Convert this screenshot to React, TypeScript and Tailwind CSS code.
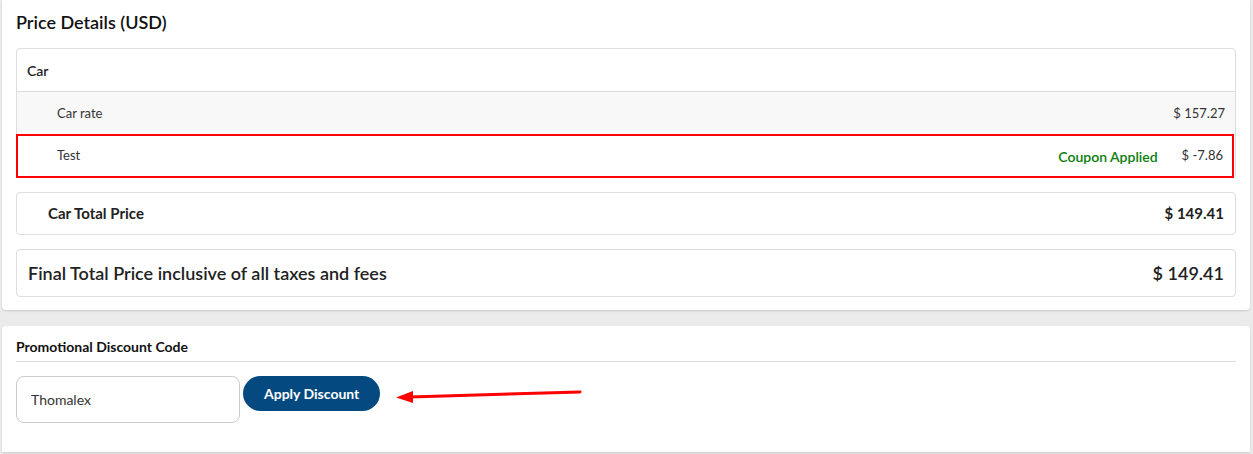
export default function App() {
  return (
    <div className="min-h-[454px] w-[1253px] bg-[#ebebeb] pl-[2px] pr-[3px] font-['Lato',sans-serif] text-[#333]">
      <div className="flex flex-col gap-4">
        <section className="rounded-b-[4px] bg-white px-[14px] pb-[13px] pt-[10px] shadow-[0_1px_2px_rgba(0,0,0,0.15)]">
          <h2 className="mb-[14px] text-[18px] font-semibold leading-6 text-[#111]">Price Details (USD)</h2>

          <div className="rounded-[4px] border border-[#dddddd]">
            <div className="flex h-[43px] items-center border-b border-[#dddddd] px-[10px] text-[14px] font-semibold text-[#222]">
              Car
            </div>
            <div className="flex h-[42px] items-center justify-between bg-[#f8f8f8] pl-[40px] pr-[10px] pt-[2px] text-[13px]">
              <span>Car rate</span>
              <span>$ 157.27</span>
            </div>
            <div className="-mx-px -mb-px mr-[1px] flex h-[44px] items-center justify-between border-2 border-[#ff0000] pl-[39px] pr-[9px] text-[13px]">
              <span>Test</span>
              <span className="flex items-center gap-[24px]">
                <span className="text-[14px] font-semibold text-[#0a7d0a]">Coupon Applied</span>
                <span>$ -7.86</span>
              </span>
            </div>
          </div>

          <div className="mt-[14px] flex h-[43px] items-center justify-between rounded-[4px] border border-[#dddddd] pl-[31px] pr-[11px] text-[15px] font-bold text-[#222]">
            <span>Car Total Price</span>
            <span>$ 149.41</span>
          </div>

          <div className="mt-[14px] flex h-[48px] items-center justify-between rounded-[4px] border border-[#dddddd] pl-[11px] pr-[11px] text-[18px] font-semibold text-[#222]">
            <span>Final Total Price inclusive of all taxes and fees</span>
            <span>$ 149.41</span>
          </div>
        </section>

        <section className="h-[126px] rounded-t-[4px] bg-white px-[14px] pt-[12px] shadow-[0_1px_2px_rgba(0,0,0,0.15)]">
          <h3 className="border-b border-[#dddddd] pb-[5px] text-[14px] font-bold leading-[18px] text-[#111]">
            Promotional Discount Code
          </h3>
          <div className="relative mt-[14px] flex items-start gap-[3px]">
            <input
              readOnly
              value="Thomalex"
              className="h-[47px] w-[224px] rounded-[8px] border border-[#cccccc] px-[14px] text-[14px] text-[#333] outline-none"
            />
            <button className="h-[35px] rounded-full bg-[#044a80] px-[21px] text-[14px] font-bold text-white">
              Apply Discount
            </button>
            <svg className="absolute left-[364px] top-[4px]" width="210" height="30" viewBox="0 0 210 30">
              <line x1="200" y1="12" x2="30" y2="17" stroke="#ff0000" strokeWidth="3" strokeLinecap="round" />
              <polygon points="16,17.5 33,11 33,23" fill="#ff0000" />
            </svg>
          </div>
        </section>
      </div>
    </div>
  );
}
